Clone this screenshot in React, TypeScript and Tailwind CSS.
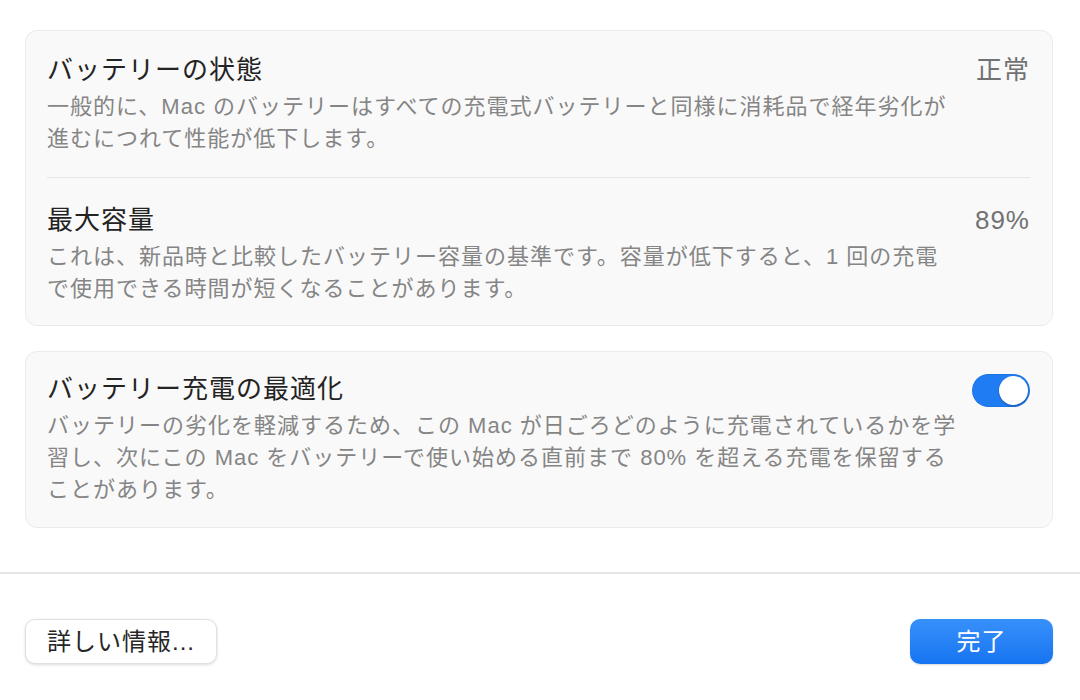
const jp = { fontFamily: '"Liberation Sans", "Noto Sans CJK JP", sans-serif' };

type RowProps = {
  title: string;
  lines: string[];
  value?: string;
  toggle?: boolean;
};

const Toggle: React.FC = () => (
  <div className="relative w-[58px] h-[33px] rounded-full bg-[#1f7cf2] shadow-[inset_0_0_0_1px_rgba(0,0,0,0.06)]">
    <div className="absolute right-[2px] top-[2px] w-[29px] h-[29px] rounded-full bg-white shadow-[0_1px_2px_rgba(0,0,0,0.3)]"></div>
  </div>
);

const Row: React.FC<RowProps> = ({ title, lines, value, toggle }) => (
  <div className="flex items-start justify-between">
    <div>
      <div className="text-[26px] leading-[34px] tracking-[1px] text-[#232323]">{title}</div>
      <div className="mt-[4px] text-[22px] leading-[32px] tracking-[1px] text-[#858585]">
        {lines.map((l) => (
          <div key={l} className="whitespace-nowrap">{l}</div>
        ))}
      </div>
    </div>
    {value && <div className="text-[26px] leading-[34px] tracking-[1px] text-[#727272]">{value}</div>}
    {toggle && (
      <div className="pt-[2px]">
        <Toggle />
      </div>
    )}
  </div>
);

export default function App() {
  return (
    <div className="h-[700px] w-[1080px] bg-white flex flex-col overflow-hidden" style={jp}>
      <div className="pl-[25px] pr-[27px] pt-[30px] flex flex-col gap-[25px]">
        {/* Battery status + capacity */}
        <div className="rounded-[12px] border border-[#ebebeb] bg-[#f9f9f9] pl-[21px] pr-[22px] pt-[22px] pb-[20px]">
          <Row
            title="バッテリーの状態"
            value="正常"
            lines={[
              '一般的に、Mac のバッテリーはすべての充電式バッテリーと同様に消耗品で経年劣化が',
              '進むにつれて性能が低下します。',
            ]}
          />
          <div className="mt-[22px] mb-[25px] h-px bg-[#e6e6e6]"></div>
          <Row
            title="最大容量"
            value="89%"
            lines={[
              'これは、新品時と比較したバッテリー容量の基準です。容量が低下すると、1 回の充電',
              'で使用できる時間が短くなることがあります。',
            ]}
          />
        </div>

        {/* Optimized charging */}
        <div className="rounded-[12px] border border-[#ebebeb] bg-[#f9f9f9] pl-[21px] pr-[22px] pt-[20px] pb-[21px]">
          <Row
            title="バッテリー充電の最適化"
            toggle
            lines={[
              'バッテリーの劣化を軽減するため、この Mac が日ごろどのように充電されているかを学',
              '習し、次にこの Mac をバッテリーで使い始める直前まで 80% を超える充電を保留する',
              'ことがあります。',
            ]}
          />
        </div>
      </div>

      <div className="mt-[44px] h-[2px] bg-[#e6e6e6]"></div>

      {/* Footer buttons */}
      <div className="pl-[25px] pr-[27px] pt-[45px] flex items-center justify-between">
        <button className="h-[45px] w-[192px] rounded-[10px] bg-white border border-[#e0e0e0] shadow-[0_1px_3px_rgba(0,0,0,0.14)] text-[24px] tracking-[1px] text-[#262626]">
          詳しい情報...
        </button>
        <button className="h-[45px] w-[143px] rounded-[10px] bg-gradient-to-b from-[#3790fa] to-[#1574f1] shadow-[0_1px_2px_rgba(0,0,0,0.15)] text-[24px] tracking-[1px] text-white">
          完了
        </button>
      </div>
    </div>
  );
}
